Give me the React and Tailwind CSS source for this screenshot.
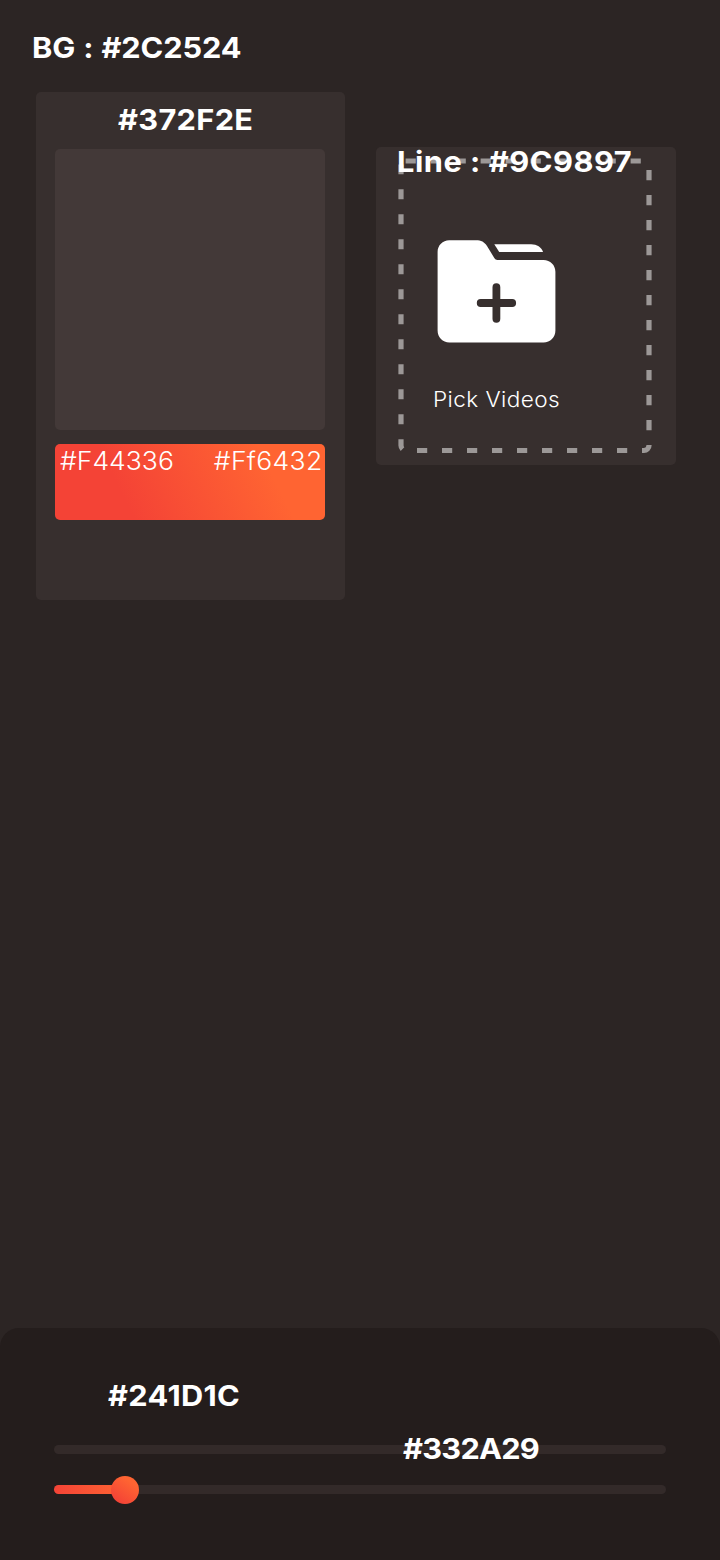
const heading = "block w-max whitespace-nowrap origin-left scale-x-[1.06] font-bold text-[29px] leading-[30px] text-white";

function FolderAdd() {
  return (
    <svg className="block w-[119px] h-[103px]" viewBox="-0.5 0 119 103" fill="none">
      <path
        d="M11.7 0.2H38.5C43.6 0.2 47 1.9 49.5 6L56.8 18C57.5 19.2 58.6 19.9 60 19.9H106C112.8 19.9 117.9 25 117.9 31.7V90.5C117.9 97.3 112.8 102.4 106 102.4H11.9C5.2 102.4 0.1 97.3 0.1 90.5V12C0.1 5.3 5.2 0.2 11.7 0.2Z"
        fill="#fff"
      />
      <path d="M56.8 4.2H93.6C99.4 4.2 103.9 7.2 105.6 12H61.7Z" fill="#fff" />
      <path d="M58.9 47.2V78.8M43.2 63H74.7" stroke="#372F2E" strokeWidth="7.8" strokeLinecap="round" />
    </svg>
  );
}

function DashedFrame() {
  return (
    <svg className="absolute inset-0 w-full h-full" viewBox="376 147 300 318" fill="none">
      <path
        d="M405.6 161H644A5 5 0 0 1 649 166V445.5A5 5 0 0 1 644 450.5H406A5 5 0 0 1 401 445.5V164.5"
        stroke="#9C9897"
        strokeWidth="5.2"
        strokeDasharray="10.2 14.8"
      />
    </svg>
  );
}

export default function App() {
  return (
    <div className="w-[720px] h-[1560px] bg-[#2C2524] flex flex-col font-['Inter',sans-serif] overflow-hidden">
      <header className="pt-[33px] pl-[32px]">
        <span className={`${heading} tracking-[-0.1px] [word-spacing:0.8px]`}>BG : #2C2524</span>
      </header>

      <main className="flex-1 flex items-start gap-[31px] pl-[36px] pt-[29px]">
        <section className="w-[309px] h-[508px] rounded-[5px] bg-[#372F2E] pl-[19px] pr-[20px] pt-[13px] flex flex-col">
          <h2 className={`${heading} ml-[63px] tracking-[0.3px]`}>#372F2E</h2>
          <div className="mt-[14px] h-[281px] rounded-[5px] bg-[#433938]" />
          <div className="mt-[14px] h-[76px] rounded-[5px] bg-[linear-gradient(64deg,#F44336_26%,#FF6432_78%)] flex justify-between pt-[2px] pl-[5px] pr-[2px] font-light text-[25.5px] leading-[30px] text-white">
            <span className="origin-left scale-x-[1.04]">#F44336</span>
            <span className="origin-right scale-x-[1.04] tracking-[0.3px]">#Ff6432</span>
          </div>
        </section>

        <section className="relative mt-[55px] w-[300px] h-[318px] rounded-[5px] bg-[#372F2E]">
          <DashedFrame />
          <div className="pt-[93px] pl-[56.5px] flex flex-col items-start">
            <div className="pl-[4.5px]">
              <FolderAdd />
            </div>
            <span className="mt-[41px] origin-left scale-x-[1.05] font-light text-[21.5px] leading-[30px] tracking-[0.4px] whitespace-nowrap text-white">Pick Videos</span>
          </div>
          <h2 className={`${heading} absolute left-[21px] top-0 tracking-[0.5px]`}>Line : #9C9897</h2>
        </section>
      </main>

      <footer className="h-[232px] rounded-t-[19px] bg-[#241D1C] px-[54px] pt-[53px]">
        <h2 className={`${heading} ml-[54px] tracking-[0.3px]`}>#241D1C</h2>
        <div className="relative mt-[34px] h-[9px] rounded-full bg-[#332A29]">
          <span className={`${heading} absolute left-[349px] top-[-11px] tracking-[-0.7px]`}>#332A29</span>
        </div>
        <div className="mt-[31px] h-[9px] rounded-full bg-[#332A29] flex items-center">
          <div className="w-[72px] h-[9px] rounded-l-full bg-gradient-to-r from-[#F44336] to-[#FF6432]" />
          <div className="-ml-[15px] size-[28px] rounded-full bg-[linear-gradient(35deg,#F44336_15%,#FF6432_75%)]" />
        </div>
      </footer>
    </div>
  );
}
